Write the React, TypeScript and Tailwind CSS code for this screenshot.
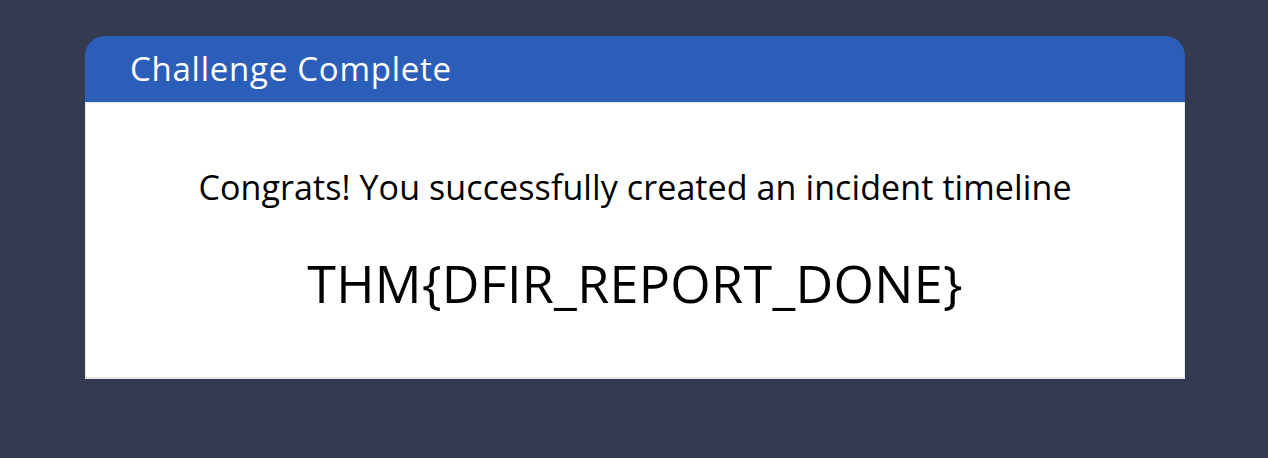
export default function App() {
  return (
    <div className="min-h-[458px] bg-[#343a4f] px-[85px] pt-9 font-['Open_Sans',sans-serif]">
      <div className="w-[1100px] overflow-hidden rounded-t-[20px]">
        <div className="flex h-[66px] items-center bg-[#2b5eb8] px-[45px]">
          <h1 className="text-[33px] leading-[44px] tracking-[0.75px] text-white">Challenge Complete</h1>
        </div>
        <div className="flex h-[277px] flex-col items-center border-x border-b-2 border-t border-[#e5e7eb] bg-white pt-[64px]">
          <p className="text-[34px] leading-[40px] tracking-[0.1px] text-black">
            Congrats! You successfully created an incident timeline
          </p>
          <p className="mt-[48px] text-[52px] leading-[56px] tracking-[0.3px] text-black">
            THM{'{'}DFIR_REPORT_DONE{'}'}
          </p>
        </div>
      </div>
    </div>
  );
}
